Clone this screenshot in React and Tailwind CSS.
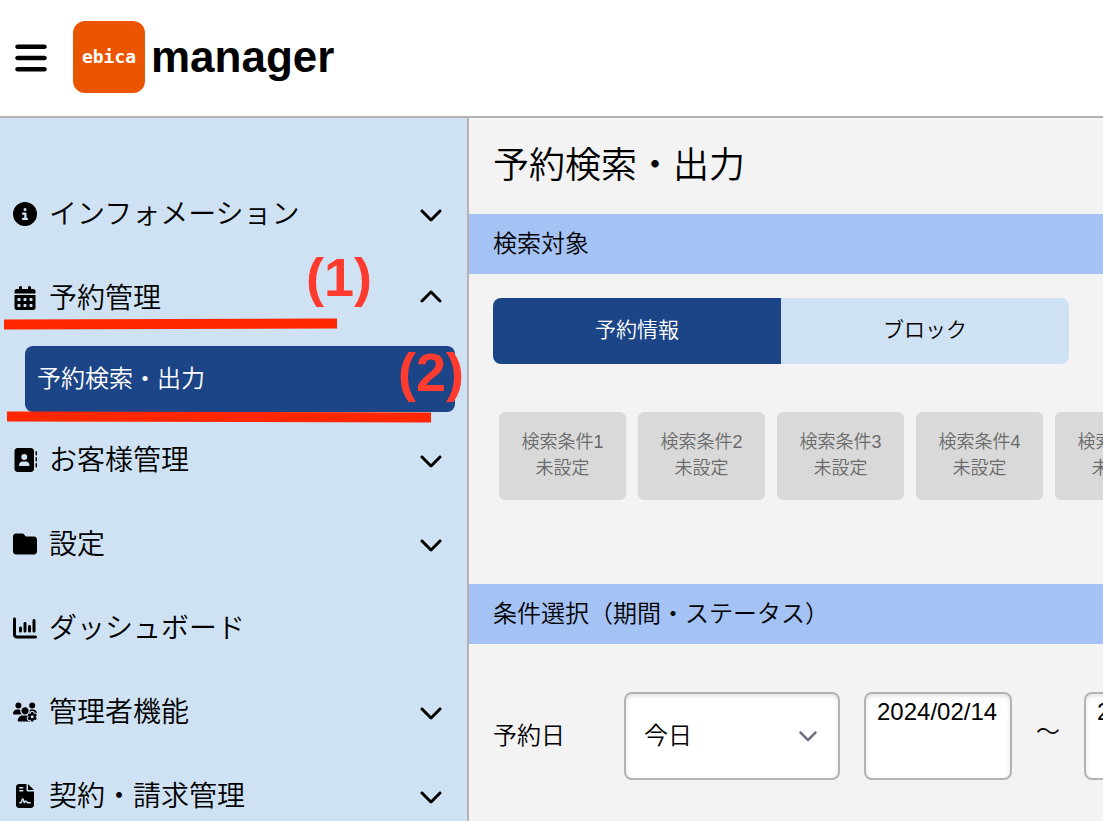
import React from "react";
import {
  FaAddressBook,
  FaBars,
  FaCalendarDays,
  FaChartColumn,
  FaChevronDown,
  FaChevronUp,
  FaCircleInfo,
  FaFileContract,
  FaFolder,
  FaUsersGear,
} from "react-icons/fa6";

const menu = [
  { label: "インフォメーション", icon: FaCircleInfo, chevron: FaChevronDown },
  {
    label: "予約管理",
    icon: FaCalendarDays,
    chevron: FaChevronUp,
    children: ["予約検索・出力"],
  },
  { label: "お客様管理", icon: FaAddressBook, chevron: FaChevronDown },
  { label: "設定", icon: FaFolder, chevron: FaChevronDown },
  { label: "ダッシュボード", icon: FaChartColumn },
  { label: "管理者機能", icon: FaUsersGear, chevron: FaChevronDown },
  { label: "契約・請求管理", icon: FaFileContract, chevron: FaChevronDown },
];

const conditions = [1, 2, 3, 4, 5];

const Header = () => {
  return (
    <header className="flex h-[118px] shrink-0 items-center border-b-2 border-[#b3b3b3] bg-white pb-0.5 pl-[13px]">
      <button type="button" aria-label="メニュー" className="pt-0.5">
        <FaBars size={36} />
      </button>
      <div className="ml-6 flex size-[72px] items-center justify-center rounded-xl bg-[#eb5500] font-['DejaVu_Sans_Mono'] text-lg font-bold text-white">
        ebica
      </div>
      <h1 className="ml-1.5 text-[44px] font-bold">manager</h1>
    </header>
  );
};

const MenuItem = ({ item }) => {
  const Icon = item.icon;
  const Chevron = item.chevron;

  return (
    <li>
      <a href="#" className="flex h-[84px] items-center pr-6 pl-[13px] text-[28px]">
        <Icon size={24} />
        <span className="ml-3 flex-1 pt-0.5">{item.label}</span>
        {Chevron && <Chevron size={24} />}
      </a>
      {item.children && (
        <ul className="py-1.5 pr-3 pl-[25px]">
          {item.children.map((child) => (
            <li key={child}>
              <a
                href="#"
                className="flex h-[66px] items-center rounded-lg bg-[#1c4587] px-3 text-2xl text-white"
              >
                {child}
              </a>
            </li>
          ))}
        </ul>
      )}
    </li>
  );
};

// Numbered steps drawn over the menu
const Steps = () => {
  return (
    <div className="pointer-events-none absolute inset-0 text-[54px] leading-none font-bold text-[#ff3b30]">
      <svg className="absolute top-0 left-0" width="467" height="320">
        <g stroke="#ff2600" strokeWidth="10">
          <line x1="4" y1="206.5" x2="337" y2="205.5" />
          <line x1="7" y1="298.5" x2="431" y2="299.5" />
        </g>
      </svg>
      <span className="absolute top-[132px] left-[306px]">(1)</span>
      <span className="absolute top-[227px] left-[398px]">(2)</span>
    </div>
  );
};

const Sidebar = () => {
  return (
    <nav className="relative w-[469px] shrink-0 border-r-2 border-[#b3b3b3] bg-[#cfe2f3] pt-[54px]">
      <ul>
        {menu.map((item) => (
          <MenuItem key={item.label} item={item} />
        ))}
      </ul>
      <Steps />
    </nav>
  );
};

const SectionTitle = ({ children }) => {
  return (
    <h3 className="flex h-[60px] items-center bg-[#a4c2f4] px-6 text-2xl font-[350]">
      {children}
    </h3>
  );
};

const DateInput = ({ label }) => {
  return (
    <input
      type="text"
      aria-label={label}
      defaultValue="2024/02/14"
      className="h-[88px] w-[148px] shrink-0 rounded-lg border-2 border-[#b3b3b3] bg-white pb-12 pl-[11px] text-2xl shadow-[inset_0_2px_4px_rgba(0,0,0,0.12)]"
    />
  );
};

const Search = () => {
  return (
    <main className="min-w-0 flex-1 overflow-hidden bg-[#f3f3f3]">
      <h2 className="flex h-24 items-center px-6 text-4xl font-[350]">
        予約検索・出力
      </h2>

      <SectionTitle>検索対象</SectionTitle>
      <div className="flex px-6 pt-6 text-[21px]">
        <button
          type="button"
          className="h-[66px] w-72 shrink-0 rounded-l-lg bg-[#1c4587] pb-0.5 text-white"
        >
          予約情報
        </button>
        <button
          type="button"
          className="h-[66px] w-72 shrink-0 rounded-r-lg bg-[#cfe2f3] pb-0.5"
        >
          ブロック
        </button>
      </div>
      <div className="flex gap-3 pt-12 pb-[84px] pl-[30px]">
        {conditions.map((n) => (
          <button
            key={n}
            type="button"
            className="h-[88px] w-[127px] shrink-0 rounded-md bg-[#d9d9d9] pb-0.5 text-lg leading-[26px] text-[#6b6b6b]"
          >
            検索条件{n}
            <br />
            未設定
          </button>
        ))}
      </div>

      <SectionTitle>条件選択（期間・ステータス）</SectionTitle>
      <div className="flex items-center gap-6 py-12 pl-6 text-2xl">
        <label htmlFor="period" className="w-[107px] shrink-0">
          予約日
        </label>
        <div className="relative shrink-0">
          <select
            id="period"
            className="h-[88px] w-[216px] appearance-none rounded-lg border-2 border-[#b3b3b3] bg-white px-[18px] shadow-[inset_0_2px_4px_rgba(0,0,0,0.12)]"
          >
            <option>今日</option>
            <option>明日</option>
          </select>
          <FaChevronDown
            size={20}
            className="pointer-events-none absolute top-[33px] right-[22px] text-[#6b7280]"
          />
        </div>
        <DateInput label="開始日" />
        <span className="w-6 shrink-0 pb-2">～</span>
        <DateInput label="終了日" />
      </div>
    </main>
  );
};

const App = () => {
  return (
    <div
      lang="ja"
      className="flex h-screen flex-col overflow-hidden font-['Liberation_Sans','Noto_Sans_CJK_JP',sans-serif] font-[350] text-black"
    >
      <Header />
      <div className="flex min-h-0 flex-1">
        <Sidebar />
        <Search />
      </div>
    </div>
  );
};

export default App;
